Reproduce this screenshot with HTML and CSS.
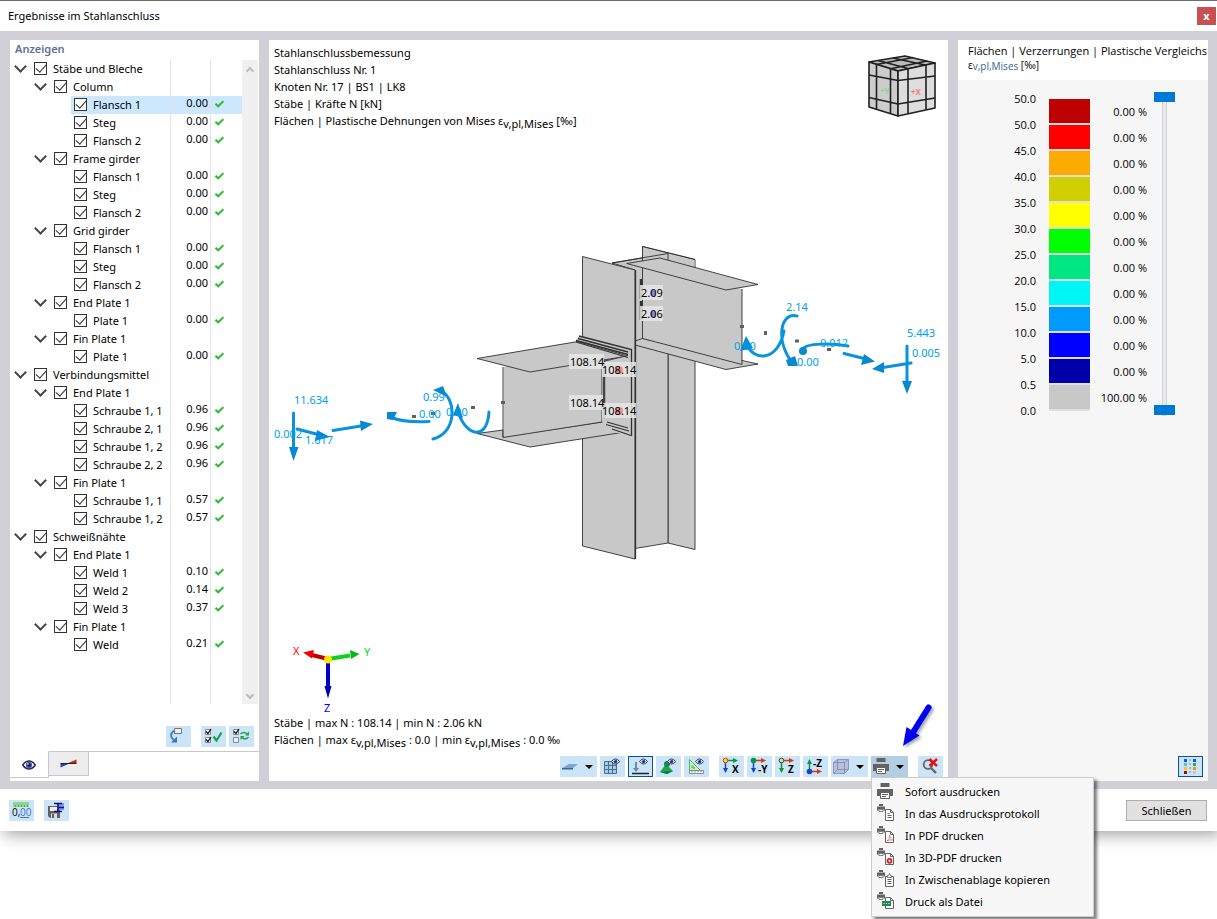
FILE: index.html
```html
<!DOCTYPE html>
<html lang="de">
<head>
<meta charset="utf-8">
<meta name="viewport" content="width=device-width, initial-scale=1">
<title>Ergebnisse im Stahlanschluss</title>
<link rel="stylesheet" href="styles.css">
</head>
<body>
<svg class="defs" aria-hidden="true">
  <symbol id="ok" viewBox="0 0 9 8"><path d="M0.5 3.8 3.2 6.3 8.4 1.2" fill="none" stroke="currentColor" stroke-width="2"/></symbol>
  <symbol id="eye" viewBox="0 0 14 10"><path d="M.7 5Q3.500 1 7 1t6.300 4Q10.500 9 7 9T.7 5z" fill="#fff" stroke="#2b2358" stroke-width="1.400"/><circle cx="7" cy="5" r="3.200" fill="#3f66ad"/><circle cx="7" cy="5" r="1.700" fill="#0a0a30"/><circle cx="6" cy="4" r=".8" fill="#fff"/></symbol>
  <symbol id="printer" viewBox="0 0 16 16"><path d="M3.500 0h9v4h-9zM0 6h16v7h-3v-3H3v3H0z" fill="#636363"/><path d="M3.500 9.500h9v6h-9z" fill="#fff" stroke="#636363"/><path d="M5 11.500h6M5 13.500h4" stroke="#636363"/></symbol>
  <symbol id="mini" viewBox="0 0 18 18"><path d="M2 0h4v2H2zM0 2.500h8v4H6.500V5h-5v1.500H0z" fill="#636363"/><path d="M2 5.500h4v2H2z" fill="#fff" stroke="#636363" stroke-width=".8"/><path d="M8.500 5.500h5l3 3v8h-8z" fill="#fff" stroke="#636363"/><path d="M13.500 5.500v3h3" fill="none" stroke="#636363"/></symbol>
</svg>

<div class="window">
  <header class="titlebar">
    <h1>Ergebnisse im Stahlanschluss</h1>
    <button class="close" type="button" aria-label="Fenster schließen">x</button>
  </header>

  <main class="work">
    <aside class="panel nav">
      <h2>Anzeigen</h2>
      <div class="tree-wrap">
        <ul class="tree">
          <li class="row l1"><div class="name"><button class="tw" aria-label="Zuklappen"></button><label><input type="checkbox" checked>Stäbe und Bleche</label></div><span class="val"></span></li>
          <li class="row l2"><div class="name"><button class="tw" aria-label="Zuklappen"></button><label><input type="checkbox" checked>Column</label></div><span class="val"></span></li>
          <li class="row l3 selected"><div class="name"><label><input type="checkbox" checked>Flansch 1</label></div><span class="val">0.00</span><svg class="ok"><use href="#ok"/></svg></li>
          <li class="row l3"><div class="name"><label><input type="checkbox" checked>Steg</label></div><span class="val">0.00</span><svg class="ok"><use href="#ok"/></svg></li>
          <li class="row l3"><div class="name"><label><input type="checkbox" checked>Flansch 2</label></div><span class="val">0.00</span><svg class="ok"><use href="#ok"/></svg></li>
          <li class="row l2"><div class="name"><button class="tw" aria-label="Zuklappen"></button><label><input type="checkbox" checked>Frame girder</label></div><span class="val"></span></li>
          <li class="row l3"><div class="name"><label><input type="checkbox" checked>Flansch 1</label></div><span class="val">0.00</span><svg class="ok"><use href="#ok"/></svg></li>
          <li class="row l3"><div class="name"><label><input type="checkbox" checked>Steg</label></div><span class="val">0.00</span><svg class="ok"><use href="#ok"/></svg></li>
          <li class="row l3"><div class="name"><label><input type="checkbox" checked>Flansch 2</label></div><span class="val">0.00</span><svg class="ok"><use href="#ok"/></svg></li>
          <li class="row l2"><div class="name"><button class="tw" aria-label="Zuklappen"></button><label><input type="checkbox" checked>Grid girder</label></div><span class="val"></span></li>
          <li class="row l3"><div class="name"><label><input type="checkbox" checked>Flansch 1</label></div><span class="val">0.00</span><svg class="ok"><use href="#ok"/></svg></li>
          <li class="row l3"><div class="name"><label><input type="checkbox" checked>Steg</label></div><span class="val">0.00</span><svg class="ok"><use href="#ok"/></svg></li>
          <li class="row l3"><div class="name"><label><input type="checkbox" checked>Flansch 2</label></div><span class="val">0.00</span><svg class="ok"><use href="#ok"/></svg></li>
          <li class="row l2"><div class="name"><button class="tw" aria-label="Zuklappen"></button><label><input type="checkbox" checked>End Plate 1</label></div><span class="val"></span></li>
          <li class="row l3"><div class="name"><label><input type="checkbox" checked>Plate 1</label></div><span class="val">0.00</span><svg class="ok"><use href="#ok"/></svg></li>
          <li class="row l2"><div class="name"><button class="tw" aria-label="Zuklappen"></button><label><input type="checkbox" checked>Fin Plate 1</label></div><span class="val"></span></li>
          <li class="row l3"><div class="name"><label><input type="checkbox" checked>Plate 1</label></div><span class="val">0.00</span><svg class="ok"><use href="#ok"/></svg></li>
          <li class="row l1"><div class="name"><button class="tw" aria-label="Zuklappen"></button><label><input type="checkbox" checked>Verbindungsmittel</label></div><span class="val"></span></li>
          <li class="row l2"><div class="name"><button class="tw" aria-label="Zuklappen"></button><label><input type="checkbox" checked>End Plate 1</label></div><span class="val"></span></li>
          <li class="row l3"><div class="name"><label><input type="checkbox" checked>Schraube 1, 1</label></div><span class="val">0.96</span><svg class="ok"><use href="#ok"/></svg></li>
          <li class="row l3"><div class="name"><label><input type="checkbox" checked>Schraube 2, 1</label></div><span class="val">0.96</span><svg class="ok"><use href="#ok"/></svg></li>
          <li class="row l3"><div class="name"><label><input type="checkbox" checked>Schraube 1, 2</label></div><span class="val">0.96</span><svg class="ok"><use href="#ok"/></svg></li>
          <li class="row l3"><div class="name"><label><input type="checkbox" checked>Schraube 2, 2</label></div><span class="val">0.96</span><svg class="ok"><use href="#ok"/></svg></li>
          <li class="row l2"><div class="name"><button class="tw" aria-label="Zuklappen"></button><label><input type="checkbox" checked>Fin Plate 1</label></div><span class="val"></span></li>
          <li class="row l3"><div class="name"><label><input type="checkbox" checked>Schraube 1, 1</label></div><span class="val">0.57</span><svg class="ok"><use href="#ok"/></svg></li>
          <li class="row l3"><div class="name"><label><input type="checkbox" checked>Schraube 1, 2</label></div><span class="val">0.57</span><svg class="ok"><use href="#ok"/></svg></li>
          <li class="row l1"><div class="name"><button class="tw" aria-label="Zuklappen"></button><label><input type="checkbox" checked>Schweißnähte</label></div><span class="val"></span></li>
          <li class="row l2"><div class="name"><button class="tw" aria-label="Zuklappen"></button><label><input type="checkbox" checked>End Plate 1</label></div><span class="val"></span></li>
          <li class="row l3"><div class="name"><label><input type="checkbox" checked>Weld 1</label></div><span class="val">0.10</span><svg class="ok"><use href="#ok"/></svg></li>
          <li class="row l3"><div class="name"><label><input type="checkbox" checked>Weld 2</label></div><span class="val">0.14</span><svg class="ok"><use href="#ok"/></svg></li>
          <li class="row l3"><div class="name"><label><input type="checkbox" checked>Weld 3</label></div><span class="val">0.37</span><svg class="ok"><use href="#ok"/></svg></li>
          <li class="row l2"><div class="name"><button class="tw" aria-label="Zuklappen"></button><label><input type="checkbox" checked>Fin Plate 1</label></div><span class="val"></span></li>
          <li class="row l3"><div class="name"><label><input type="checkbox" checked>Weld</label></div><span class="val">0.21</span><svg class="ok"><use href="#ok"/></svg></li>
          <li class="row rest" aria-hidden="true"><div class="name"></div><span class="val"></span></li>
        </ul>
        <div class="scrollbar" aria-hidden="true"><span class="arrow up"></span><span class="arrow down"></span></div>
      </div>
      <div class="nav-tools">
        <button class="tool wide-gap" aria-label="Auswahl übernehmen"><svg viewBox="0 0 25 21"><path d="M8.500 2.500h7v5h-7z" fill="#eee" stroke="#777"/><path d="M8 4.500Q2 9.500 8 14" fill="none" stroke="#4a84bd" stroke-width="2"/><path d="M5 16.500h6v-6z" fill="#3b77b5"/></svg></button>
        <button class="tool" aria-label="Alle auswählen"><svg viewBox="0 0 25 21"><path d="M4.500 3.500h5v5h-5zM4.500 11.500h5v5h-5z" fill="#fff" stroke="#888"/><path d="M5 5.500l2 2 3-4.500M5 13.500l2 2 3-4.500" fill="none" stroke="#111" stroke-width="1.300"/><path d="M12.500 10.500l3 4 5-8" fill="none" stroke="#13a448" stroke-width="2.200"/></svg></button>
        <button class="tool" aria-label="Auswahl umkehren"><svg viewBox="0 0 25 21"><path d="M4.500 3.500h5v5h-5zM4.500 11.500h5v5h-5z" fill="#eaf3fb" stroke="#888"/><path d="M5 5.500l2 2 3-4.500" fill="none" stroke="#111" stroke-width="1.300"/><path d="M11.500 8q3.500-3 6.500 0M19.500 11q-3.500 3.500-6.500.5" fill="none" stroke="#27a14b" stroke-width="1.600"/><path d="M20 5.500v4h-4zM11.500 14v-4h4z" fill="#27a14b"/></svg></button>
      </div>
      <div class="tabs" role="tablist">
        <button class="tab active" role="tab" aria-selected="true" aria-label="Anzeigen"><svg width="14" height="10"><use href="#eye"/></svg></button>
        <button class="tab" role="tab" aria-selected="false" aria-label="Ergebnisse"><svg width="17" height="10" viewBox="0 0 17 10"><path d="M7 4.500 16.500.5v4z" fill="#c42a12"/><path d="M.5 4.500h9l-9 4z" fill="#2448b4"/><path d="M.5 4.500h16" stroke="#222"/></svg></button>
        <span class="tab-line"></span>
      </div>
    </aside>

    <section class="panel view">
      <svg class="scene" viewBox="269 40 679 741" role="img" aria-label="3D-Modell des Stahlanschlusses">
        <defs>
          <filter id="soft" x="-20%" y="-20%" width="150%" height="150%"><feDropShadow dx="2" dy="2" stdDeviation="1.500" flood-opacity=".35"/></filter>
        </defs>
        <g class="steel">
          <path d="M642.500 246.500 695 259.500V549.500L668 543V253.500L642.500 268z"/>
          <path d="M612 263 668 253.500V543L635 548.500V270z"/>
          <path class="nl" d="M642.500 247 694.500 260V300H642.500z"/>
          <path d="M642.500 268V246.500L695 259.500" fill="none"/>
          <path d="M668 262V253.500L612 263" fill="none"/>
          <path d="M642.500 266 742 289V364L635 345 642.500 338z" class="nl"/>
          <path d="M635 341 642.500 338.500 758 364 726 369.500 635 345z"/>
          <path class="nl" d="M643 330 741.500 350V364L643 339z"/>
          <path d="M642.500 268V338.500L742 364.500V289" fill="none"/>
          <path d="M626.700 263.500 660 258 758 284.500 726 290z"/>
          <path d="M582.500 256.500 635 270V559L582.500 546z"/>
          <path d="M635.500 270V559" stroke-width="1.300"/>
          <path d="M477 433.500 503 430V437L602 422 628 431.500 530 447z"/>
          <path class="nl" d="M503.500 367 602 350V422L503.500 438z"/>
          <path d="M503 367V437.500L602 422V356" fill="none"/>
          <path d="M477 358.500 578 341.500 628 356 530 372z"/>
          <path d="M576.500 339 579 336 631 349.500V436L605 430V426L602 422V362L628 355 576.500 341z" class="nl"/>
          <path d="M605 361 628 355.500" fill="none"/>
          <path d="M579 336 631.500 349.500V436M578 338.500 628 352M576 340.500 628 354.500M576 342 628 357.500" fill="none" stroke-width="1.300"/>
          <path d="M604 360V418" stroke-width="2.500" stroke="#444"/>
          <path d="M607 422 628 428M606 424.500 629 431M612 429 631 435.500" stroke-width="1.200"/>
          <path d="M641 279V299M641 301V320" stroke-width="2.500" stroke="#333"/>
        </g>
        <g class="nodes"><path d="M764 331h3v4h-3zM795 339.500h4v3h-4zM827 348h4v3h-4zM412 415h4v3h-4zM471 406h4v3h-4zM740 325h4v3h-4zM501 401h4v3h-4zM431 412h4v3h-4z"/></g>
        <g class="tags">
          <path d="M640 285h23v15h-23zM640 306h23v15h-23zM569 354h35v15h-35zM602 362h34v15h-34zM569 395h34v15h-34zM602 403h34v15h-34z"/>
          <circle cx="653" cy="293" r="3" fill="#8888e0"/><circle cx="653" cy="314" r="3" fill="#8888e0"/><circle cx="619" cy="370" r="4" fill="#f09090"/><circle cx="619" cy="411" r="4" fill="#f09090"/>
          <text x="641" y="297">2.09</text><text x="641" y="318">2.06</text>
          <text x="570" y="366">108.14</text><text x="602" y="374">108.14</text><text x="570" y="407">108.14</text><text x="602" y="415">108.14</text>
        </g>
        <g class="force">
          <path d="M293.500 413V449M297 429 320 435M333 430.500 361 426M390 417Q405 423 429 421.500M441 391C456 398 458 432 433 439M458 410C463 434 487 444 489 412M746 343C753 362 778 362 784 331M797 316C780 312 776 340 791 361M803 349C806 343 832 343 848 346M844 353.500 866 359M911 363 883 367.500M907 346V382"/>
          <path class="head" d="M289 447h9.500L293.500 461zM317 430 330 437 315 441zM360 420.500 373 424 361 431zM387 412 397 412 393 420 387 419zM433 390 443 386 447 397zM458 403 463 418 453 415zM746 336 753 348 740 351zM786 360 795 356 798 366 788 366zM864 354 875 361.500 861 365zM884 362 872 369 884 373zM902 381h10L907 394z"/>
          <circle class="head" cx="803" cy="351" r="4"/>
          <text x="294" y="404">11.634</text><text x="274" y="438">0.002</text><text x="305" y="444">1.617</text><text x="423" y="401">0.99</text><text x="419" y="418">0.00</text><text x="446" y="416">0.00</text>
          <text x="786" y="311">2.14</text><text x="734" y="350">0.00</text><text x="797" y="366">0.00</text><text x="820" y="347">0.012</text><text x="907" y="337">5.443</text><text x="912" y="357">0.005</text>
        </g>
        <g class="axes">
          <path d="M328 659 310 654.500" stroke="#c00000"/><path d="M303 652.500 314 650 312 658.500z" fill="#f00000"/>
          <path d="M328 659 350 655.500" stroke="#10d020"/><path d="M359.500 654 350 650 351 659z" fill="#00b818"/>
          <path d="M328 659V690" stroke="#0000d0"/><path d="M324.500 686h7L328 698.500z" fill="#0000b0"/>
          <circle cx="328" cy="659.500" r="4" fill="#ffe800"/>
          <text x="293" y="655" fill="#ff0000">X</text><text x="364" y="656" fill="#00dc20">Y</text><text x="324" y="712" fill="#0000ff">Z</text>
        </g>
        <g class="cube">
          <path d="M869 62 905 56 935 63 898 71z" fill="#bbb"/><path d="M869 62 898 71V116L869 107z" fill="#ccc"/><path d="M898 71 935 63V108L898 116z" fill="#ddd"/>
          <path d="M878 60.500 908 68.500M893 58 925 65M876.500 64.500 913 57.500M889.500 69 927 61M876.500 64.500V109M890.500 69V113.500M908 69V114M926 65V110M869 75 898 80.500 935 76M869 97.500 898 104 935 98"/>
          <text x="880" y="94" fill="#9ccc9c">+Y</text><text x="911" y="95" fill="#f08080">+X</text>
        </g>
        <g filter="url(#soft)"><path d="M928.500 707.500 912 734" stroke="#0000ee" stroke-width="6" stroke-linecap="round"/><path d="M903 746 906.500 727 919.500 735.500z" fill="#0000ee"/></g>
      </svg>

      <div class="caption">
        <p>Stahlanschlussbemessung</p>
        <p>Stahlanschluss Nr. 1</p>
        <p>Knoten Nr. 17 | BS1 | LK8</p>
        <p>Stäbe | Kräfte N [kN]</p>
        <p>Flächen | Plastische Dehnungen von Mises ε<sub>v,pl,Mises</sub> [‰]</p>
      </div>
      <div class="caption results">
        <p>Stäbe | max N : 108.14 | min N : 2.06 kN</p>
        <p>Flächen | max ε<sub>v,pl,Mises</sub> : 0.0 | min ε<sub>v,pl,Mises</sub> : 0.0 ‰</p>
      </div>

      <div class="toolbar">
        <div class="group">
          <button class="tool drop" aria-label="Flächendarstellung"><svg viewBox="0 0 25 21"><path d="M2 12 9 8h9l-5 4z" fill="#7ba6cf"/><path d="M2 12h11v1.500H2z" fill="#3a6694"/></svg></button>
          <button class="tool" aria-label="Raster anzeigen"><svg viewBox="0 0 25 21"><path d="M4.500 5.500h12v12h-12zM8.500 5.500v12M12.500 5.500v12M4.500 9.500h12M4.500 13.500h12" fill="#a9c9e4" stroke="#4c6f91"/><use href="#eye" x="11" y="2" width="9" height="7"/></svg></button>
          <button class="tool on" aria-label="Lasten anzeigen"><svg viewBox="0 0 25 21"><path d="M8 6v8" stroke="#668aae" stroke-width="2"/><path d="M5 12h6l-3 4z" fill="#668aae"/><path d="M4 17.500h17" stroke="#222" stroke-width="1.500"/><use href="#eye" x="11" y="2" width="9" height="7"/></svg></button>
          <button class="tool" aria-label="Lager anzeigen"><svg viewBox="0 0 25 21"><path d="M10 8 17 15 11 18 4 16z" fill="#23a355"/><path d="M4 16 17 15 11 18z" fill="#08753a"/><circle cx="11" cy="8" r="3" fill="#168b45"/><use href="#eye" x="11" y="2" width="9" height="7"/></svg></button>
          <button class="tool" aria-label="Maße anzeigen"><svg viewBox="0 0 25 21"><path d="M5.500 3.500v11h11zM8 9.500V12h3z" fill="#c5efc8" fill-rule="evenodd" stroke="#4cba58"/><path d="M5.500 14.500h14v3h-14z" fill="#fff" stroke="#777" stroke-width=".8"/><path d="M8 15v1.500M11 15v1.500M14 15v1.500M17 15v1.500" stroke="#777"/><use href="#eye" x="11" y="2" width="9" height="7"/></svg></button>
        </div>
        <div class="group">
          <button class="tool" aria-label="Ansicht X"><svg viewBox="0 0 25 21"><path d="M7 4.500h8" stroke="#0a9440" stroke-width="1.500"/><path d="M14 2v5l5-2.500z" fill="#0a9440"/><path d="M6.500 5v8" stroke="#1543c4" stroke-width="1.500"/><path d="M4 12h5l-2.500 5z" fill="#1543c4"/><circle cx="6.500" cy="4.500" r="2.300" fill="#f7e420" stroke="#d43b10"/><text x="13" y="17">X</text></svg></button>
          <button class="tool" aria-label="Ansicht -Y"><svg viewBox="0 0 25 21"><path d="M7 4.500h8" stroke="#d43b10" stroke-width="1.500"/><path d="M14 2v5l5-2.500z" fill="#d43b10"/><path d="M6.500 5v8" stroke="#1543c4" stroke-width="1.500"/><path d="M4 12h5l-2.500 5z" fill="#1543c4"/><circle cx="6.500" cy="4.500" r="2.800" fill="#0a9440"/><text x="11" y="17">-Y</text></svg></button>
          <button class="tool" aria-label="Ansicht Z"><svg viewBox="0 0 25 21"><path d="M7 4.500h8" stroke="#d43b10" stroke-width="1.500"/><path d="M14 2v5l5-2.500z" fill="#d43b10"/><path d="M6.500 5v8" stroke="#0a9440" stroke-width="1.500"/><path d="M4 12h5l-2.500 5z" fill="#0a9440"/><circle cx="6.500" cy="4.500" r="2.300" fill="#f7e420" stroke="#1543c4"/><text x="13" y="17">Z</text></svg></button>
          <button class="tool" aria-label="Ansicht -Z"><svg viewBox="0 0 25 21"><path d="M7 15.500h8" stroke="#d43b10" stroke-width="1.500"/><path d="M14 13v5l5-2.500z" fill="#d43b10"/><path d="M6.500 15V7" stroke="#0a9440" stroke-width="1.500"/><path d="M4 8h5L6.500 3z" fill="#0a9440"/><circle cx="6.500" cy="15.500" r="2.800" fill="#1543c4"/><text x="10" y="11">-Z</text></svg></button>
          <button class="tool drop" aria-label="Darstellung"><svg viewBox="0 0 25 21"><path d="M2.500 6.500 6.500 3.500h11v10l-4 4h-11z" fill="#b9bfdf"/><path d="M2.500 6.500 6.500 3.500h11v10l-4 4h-11zM2.500 6.500h11v11M13.500 6.500l4-3M6.500 3.500v10h11M6.500 13.500l-4 4" fill="none" stroke="#8386a6" stroke-width=".8"/></svg></button>
          <div class="print">
            <button class="tool drop pressed" aria-label="Drucken" aria-haspopup="menu" aria-expanded="true"><svg viewBox="0 0 25 21"><use href="#printer" x="2" y="2" width="16" height="16"/></svg></button>
            <div class="menu" role="menu">
              <button role="menuitem"><svg viewBox="0 0 18 18"><use href="#printer" x="0" y="1" width="16" height="16"/></svg>Sofort ausdrucken</button>
              <button role="menuitem"><svg viewBox="0 0 18 18"><use href="#mini"/><path d="M10.500 9.500h2M10.500 11.500h4M10.500 13.500h4" stroke="#636363"/></svg>In das Ausdrucksprotokoll</button>
              <button role="menuitem"><svg viewBox="0 0 18 18"><use href="#mini"/><path d="M10 15q3-2 2.500-6 .5 4 3 5-3-.5-5.500 1z" fill="none" stroke="#e88080"/></svg>In PDF drucken</button>
              <button role="menuitem"><svg viewBox="0 0 18 18"><use href="#mini"/><circle cx="12.500" cy="12.800" r="2" fill="none" stroke="#e01818" stroke-width="1.800"/></svg>In 3D-PDF drucken</button>
              <button role="menuitem"><svg viewBox="0 0 18 18"><path d="M2 0h4v2H2zM0 2.500h8v4H6.500V5h-5v1.500H0z" fill="#636363"/><path d="M2 5.500h4v2H2z" fill="#fff" stroke="#636363" stroke-width=".8"/><path d="M8.500 6.500h8v10h-8z" fill="#fff" stroke="#636363"/><path d="M10.500 7.500v-2h1l1-2 1 2h1v2z" fill="#fff" stroke="#636363" stroke-width=".8"/><path d="M10.500 9.500h4M10.500 11.500h4M10.500 13.500h4" stroke="#636363"/></svg>In Zwischenablage kopieren</button>
              <button role="menuitem"><svg viewBox="0 0 18 18"><use href="#mini"/><path d="M5 9h9v5H5z" fill="#1c8a50"/><path d="M6.500 11.500h1M9 11.500h1M11.500 11.500h1" stroke="#fff"/></svg>Druck als Datei</button>
            </div>
          </div>
        </div>
        <div class="group">
          <button class="tool" aria-label="Auswahl aufheben"><svg viewBox="0 0 25 21"><circle cx="10" cy="8.500" r="4.300" fill="none" stroke="#666" stroke-width="1.800"/><path d="M13 12l5 5" stroke="#666" stroke-width="2.400"/><path d="M11.500 3l7.500 7M19 3l-7.500 7" stroke="#e80c0c" stroke-width="2.400"/></svg></button>
        </div>
      </div>
    </section>

    <aside class="panel legend">
      <div class="legend-title">
        <p>Flächen | Verzerrungen | Plastische Vergleichs</p>
        <p class="unit">ε<sub>v,pl,Mises</sub> [‰]</p>
      </div>
      <div class="legend-body">
        <div class="scale">
          <ol class="limits"><li>50.0</li><li>50.0</li><li>45.0</li><li>40.0</li><li>35.0</li><li>30.0</li><li>25.0</li><li>20.0</li><li>15.0</li><li>10.0</li><li>5.0</li><li>0.5</li><li>0.0</li></ol>
          <ol class="bands">
            <li class="c1"></li><li class="c2"></li><li class="c3"></li><li class="c4"></li><li class="c5"></li><li class="c6"></li><li class="c7"></li><li class="c8"></li><li class="c9"></li><li class="c10"></li><li class="c11"></li><li class="c12"></li>
          </ol>
          <ol class="shares"><li>0.00 %</li><li>0.00 %</li><li>0.00 %</li><li>0.00 %</li><li>0.00 %</li><li>0.00 %</li><li>0.00 %</li><li>0.00 %</li><li>0.00 %</li><li>0.00 %</li><li>0.00 %</li><li>100.00 %</li></ol>
          <div class="range">
            <input type="range" min="0" max="100" value="100" aria-label="Obere Grenze">
            <input type="range" min="0" max="100" value="0" aria-label="Untere Grenze">
          </div>
        </div>
        <button class="tool on" aria-label="Skala einstellen"><svg viewBox="0 0 25 21"><path d="M6 3h3v3H6z" fill="#2050e0"/><path d="M6 7h3v3H6z" fill="#40c8e0"/><path d="M6 11h3v3H6z" fill="#f0d000"/><path d="M6 15h3v3H6z" fill="#c00000"/><path d="M15 3h3v3h-3z" fill="#2050e0"/><path d="M15 7h3v3h-3z" fill="#20b060"/><path d="M15 11h3v3h-3z" fill="#f09020"/><path d="M15 15h3v3h-3z" fill="#c8c8c8"/><path d="M12 3v15" stroke="#888" stroke-dasharray="2 2"/></svg></button>
      </div>
    </aside>
  </main>

  <footer class="actions">
    <button class="tool" aria-label="Einheiten und Dezimalstellen"><svg viewBox="0 0 25 21"><path d="M4 2h16v5H4z" fill="#8fd68a"/><path d="M6.500 5v2M9.500 5v2M12.500 5v2M15.500 5v2M18.500 5v2" stroke="#5aa855"/><text class="digits" x="3" y="16">0,</text><text class="digits blue" x="11" y="16">00</text><path d="M11 17.500h9" stroke="#3b6fd6"/></svg></button>
    <button class="tool" aria-label="Speichern"><svg viewBox="0 0 25 21"><path d="M4 6h12v12H6l-2-2z" fill="#606060"/><path d="M6 7h7v4H6z" fill="#eee"/><path d="M7 13.500h6V18H7z" fill="#ddd"/><path d="M8 14h2v4H8z" fill="#606060"/><path d="M13 3h7v7h-7z" fill="#8a90f5"/><path d="M10 3.500h8M10 11.500h8M14 3.500v8M14 7.500h6" stroke="#101080" stroke-width="1.500"/></svg></button>
    <button class="dismiss" type="button">Schließen</button>
  </footer>
</div>
</body>
</html>
```
FILE: styles.css
```css
* { box-sizing: border-box; }
body { margin: 0; min-height: 100vh; background: #fff; color: #000; font: 11px/17px "Noto Sans", "Open Sans", sans-serif; }
button { margin: 0; padding: 0; border: 0; background: none; font: inherit; color: inherit; }
h1, h2, p, ul, ol { margin: 0; padding: 0; list-style: none; font: inherit; }
svg { display: block; }
sub { vertical-align: -3px; font-size: 11px; line-height: 0; }
.defs { position: absolute; width: 0; height: 0; }

.window { display: flex; flex-direction: column; min-height: calc(100vh - 88px); background: #fff; border-top: 1px solid #6d6d6d; box-shadow: 4px 3px 16px rgba(0, 0, 0, .4); }
.titlebar { display: flex; align-items: flex-start; justify-content: space-between; height: 30px; padding: 6px 1px 0 8px; }
.close { width: 19px; height: 18px; background: #c75050; color: #fff; font-weight: 700; line-height: 16px; }

.work { flex: 1; display: grid; grid-template-columns: 249px minmax(0, 1fr) 250px; gap: 10px; padding: 9px 9px 8px 10px; background: #d1d0d6; }
.panel { display: flex; flex-direction: column; background: #fff; }

.nav h2 { padding: 0 5px; height: 20px; line-height: 17px; font-weight: 600; color: #5d7096; }
.tree-wrap { flex: 1; display: flex; padding-right: 1px; }
.tree { flex: 1; display: flex; flex-direction: column; }
.row { display: flex; height: 18px; }
.row.rest { flex: 1; height: auto; }
.name { flex: 1; display: flex; align-items: center; padding-bottom: 2px; }
.name label { display: flex; align-items: center; gap: 6px; white-space: nowrap; }
.l1 .name { padding-left: 4px; }
.l2 .name { padding-left: 24px; }
.l3 .name { padding-left: 64px; }
.name, .val { border-right: 1px solid #e3e3e3; }
.val { width: 40px; padding-right: 2px; text-align: right; line-height: 13px; }
.ok { width: 9px; height: 8px; margin: 4px 18px 0 4px; color: #2fbb35; }
.row:not(:has(.ok)) .val { margin-right: 31px; }
.selected { background: linear-gradient(#cce8ff, #cce8ff) 61px 0 no-repeat; }
.tw { display: grid; place-items: center; width: 12px; height: 12px; margin-right: 8px; }
.tw::before { content: ""; width: 7px; height: 7px; margin-bottom: 5px; border: solid #444; border-width: 0 2px 2px 0; transform: rotate(45deg); }
.name input { appearance: none; width: 13px; height: 13px; margin: 0; border: 1px solid #333; background: #fff; display: grid; place-items: center; }
.name input::before { content: ""; width: 9px; height: 5px; margin-top: -3px; border: solid #333; border-width: 0 0 1px 1px; transform: rotate(-48deg); }
.scrollbar { display: flex; flex-direction: column; justify-content: space-between; align-items: center; width: 16px; padding: 8px 0 6px; background: #f0f0f0; }
.arrow { width: 6px; height: 6px; border: solid #bdbdbd; border-width: 2px 0 0 2px; transform: rotate(45deg); }
.arrow.down { transform: rotate(225deg); }

.tool { flex: none; width: 25px; height: 21px; background: #cce4f7; }
.tool svg { width: 25px; height: 21px; }
.tool text { font: 700 10px "Open Sans", sans-serif; }
.tool .digits { font-size: 10px; font-weight: 400; }
.tool .blue { fill: #3b6fd6; }
.tool.on { outline: 1px solid #0054a0; outline-offset: -1px; }
.tool.drop { display: flex; align-items: center; width: 37px; }
.tool.drop::after { content: ""; border: solid transparent; border-width: 4px 4px 0; border-top-color: #000; }
.tool.pressed { background: #b3cde2; }
.nav-tools { display: flex; justify-content: flex-end; gap: 3px; padding: 22px 5px 4px; }
.wide-gap { margin-right: 7px; }
.tabs { display: flex; align-items: flex-start; height: 30px; }
.tab { display: grid; place-items: center; width: 40px; height: 25px; background: #ededed; border: 1px solid #c8c6d2; border-left-width: 0; }
.tab.active { width: 39px; height: 27px; background: #fff; border-top-color: #fff; }
.tab-line { flex: 1; border-top: 1px solid #c8c6d2; }

.view { position: relative; padding: 4px 5px; }
.scene { position: absolute; inset: 0; width: 100%; height: 100%; }
.caption { position: relative; white-space: nowrap; }
.results { margin-top: auto; padding-bottom: 8px; }
.scene text { font-size: 11px; }
.steel { fill: #c8c8c8; stroke: #303030; stroke-width: .9; }
.steel .nl { stroke: none; }
.nodes { fill: #606060; }
.tags path { fill: #e6e6e6; fill-opacity: .85; }
.force path { fill: none; stroke: #0a93dc; stroke-width: 3; stroke-linecap: round; }
.force .head { fill: #0789cf; stroke: none; }
.scene .force text { fill: #00a0f0; }
.axes path { stroke-width: 4; }
.axes path[fill] { stroke: none; }
.cube path { stroke: #202020; stroke-width: 1.6; stroke-linejoin: round; }
.cube path:not([fill]) { fill: none; }
.scene .cube text { font-size: 8px; font-weight: 700; }

.toolbar { position: relative; display: flex; justify-content: flex-end; gap: 10px; }
.group { display: flex; gap: 3px; }
.print { position: relative; }
.menu { position: absolute; z-index: 2; top: 100%; left: 0; width: 223px; padding: 2px 1px 4px; background: #f7f7f7; border: 1px solid #ccc; box-shadow: 3px 3px 3px rgba(0, 0, 0, .5); }
.menu button { display: flex; align-items: center; gap: 10px; width: 100%; height: 22px; padding-left: 4px; white-space: nowrap; }
.menu svg { width: 18px; height: 18px; }

.legend { font-family: "Open Sans", "Noto Sans", sans-serif; }
.legend-title { height: 40px; padding: 3px 0 0 10px; line-height: 15px; white-space: nowrap; }
.unit, .unit sub { font-size: 10px; }
.unit { line-height: 14px; }
.unit sub { vertical-align: -1px; color: #356496; }
.legend-body { flex: 1; display: flex; flex-direction: column; justify-content: space-between; align-items: flex-end; padding: 6px 5px 4px; background: #f6f6f6; }
.scale { display: flex; margin-right: 28px; line-height: 26px; text-align: right; }
.limits { margin-right: 13px; }
.bands { width: 41px; margin-top: 13px; }
.bands li { height: 26px; border: solid #e0dede; border-width: 0 0 2px; }
.shares { width: 57px; margin-top: 13px; }
.range { position: relative; width: 21px; height: 324px; margin: 6px 0 0 7px; }
.range::before { content: ""; position: absolute; inset: 0 8px; border: 1px solid #cfd3d3; background: #e6eaea; }
.range input { position: absolute; inset: 0; width: 21px; height: 323px; margin: 0; appearance: none; background: none; writing-mode: vertical-lr; direction: rtl; pointer-events: none; }
.range input::-webkit-slider-thumb { appearance: none; width: 21px; height: 10px; border: 0; background: #0078d7; pointer-events: auto; }
.c1 { background: #be0000; } .c2 { background: #ff0000; } .c3 { background: #ffaa00; } .c4 { background: #d0d000; }
.c5 { background: #ffff00; } .c6 { background: #00ff00; } .c7 { background: #00e682; } .c8 { background: #00f5f5; }
.c9 { background: #009bff; } .c10 { background: #0000ff; } .c11 { background: #0000aa; } .c12 { background: #c8c8c8; }

.actions { display: flex; align-items: center; gap: 10px; height: 42px; padding: 0 10px 0 9px; }
.dismiss { width: 81px; height: 21px; margin-left: auto; background: #e1e1e1; border: 1px solid #adadad; line-height: 19px; }
```
